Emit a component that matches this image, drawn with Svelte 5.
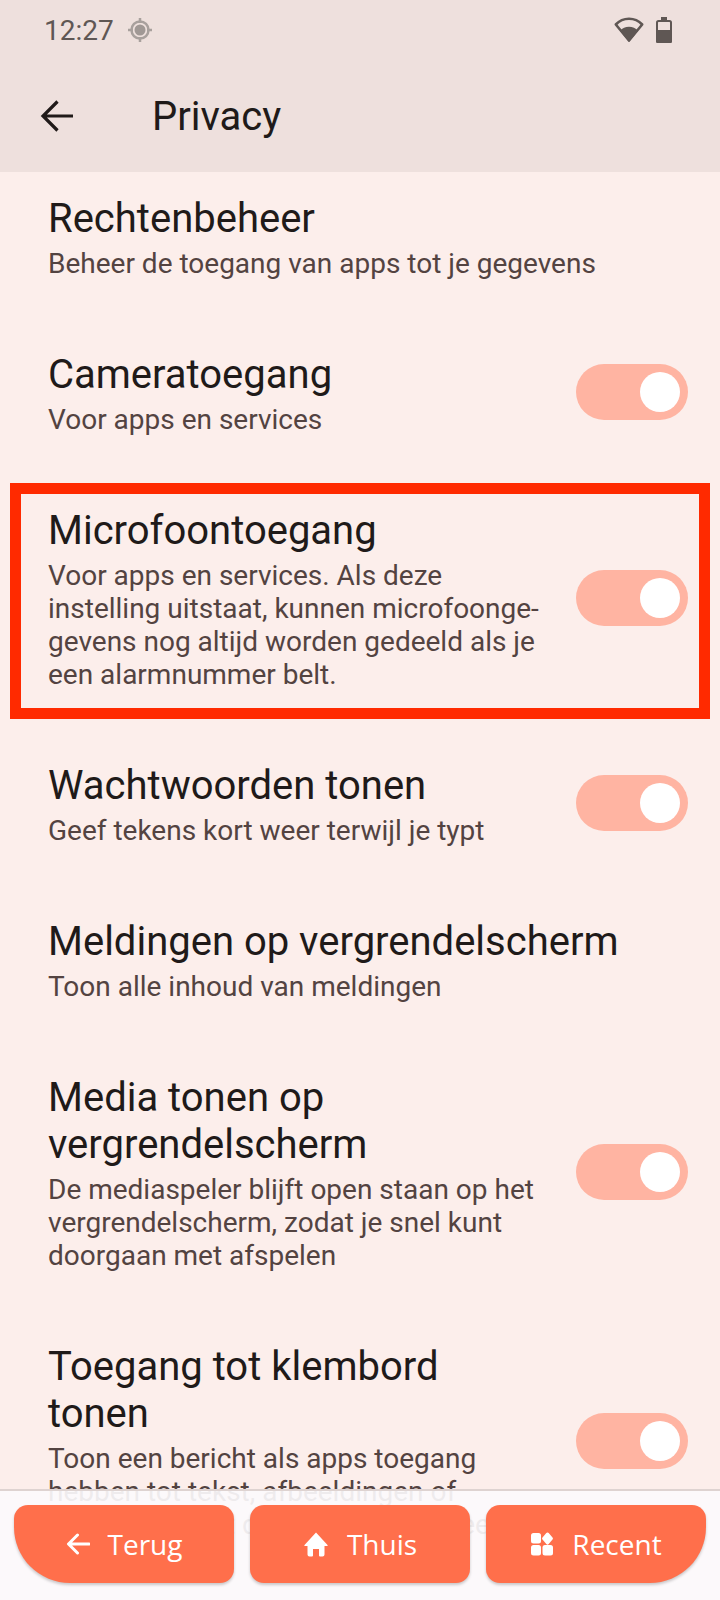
<script lang="ts">
  interface Row {
    title: string;
    summary: string;
    toggle?: boolean;
    highlight?: boolean;
  }

  const rows: Row[] = [
    { title: "Rechtenbeheer", summary: "Beheer de toegang van apps tot je gegevens" },
    { title: "Cameratoegang", summary: "Voor apps en services", toggle: true },
    {
      title: "Microfoontoegang",
      summary:
        "Voor apps en services. Als deze\ninstelling uitstaat, kunnen microfoonge-\ngevens nog altijd worden gedeeld als je\neen alarmnummer belt.",
      toggle: true,
      highlight: true,
    },
    { title: "Wachtwoorden tonen", summary: "Geef tekens kort weer terwijl je typt", toggle: true },
    { title: "Meldingen op vergrendelscherm", summary: "Toon alle inhoud van meldingen" },
    {
      title: "Media tonen op\nvergrendelscherm",
      summary:
        "De mediaspeler blijft open staan op het\nvergrendelscherm, zodat je snel kunt\ndoorgaan met afspelen",
      toggle: true,
    },
    {
      title: "Toegang tot klembord\ntonen",
      summary:
        "Toon een bericht als apps toegang\nhebben tot tekst, afbeeldingen of\nandere content die je hebt gekopieerd",
      toggle: true,
    },
  ];
</script>

<div class="screen">
  <header class="appbar">
    <div class="status">
      <div class="status-left">
        <span class="clock">12:27</span>
        <svg width="24" height="24" viewBox="0 0 24 24">
          <path d="M12 0v5M12 19v5M0 12h5M19 12h5" stroke="#a8a09d" stroke-width="2.500" fill="none" />
          <circle cx="12" cy="12" r="8.500" fill="none" stroke="#a8a09d" stroke-width="2.500" />
          <circle cx="12" cy="12" r="5.500" fill="#a09895" />
        </svg>
      </div>
      <div class="status-right">
        <svg width="30" height="26" viewBox="0 0 30 26">
          <path d="M15 23.500L1.800 7.500C5.400 3.700 10 1.800 15 1.800s9.600 1.900 13.200 5.700z" fill="none" stroke="#5f5754" stroke-width="2.600" stroke-linejoin="round" />
          <path d="M15 25L6 13.800C8.300 11.300 11.500 9.800 15 9.800s6.700 1.500 9 4z" fill="#5f5754" />
        </svg>
        <svg width="16" height="26" viewBox="0 0 16 26">
          <path d="M5 0h6v3H5z" fill="#5f5754" />
          <rect x="1" y="4" width="14" height="21" rx="1.500" fill="none" stroke="#5f5754" stroke-width="2" />
          <path d="M0 13h16v11.500a1.500 1.500 0 0 1-1.500 1.500h-13A1.500 1.500 0 0 1 0 24.500z" fill="#5f5754" />
        </svg>
      </div>
    </div>
    <div class="toolbar">
      <svg class="back" width="33" height="32" viewBox="0 0 33 32">
        <path d="M33 16H3.500M17.500 1.500L3 16l14.500 14.500" fill="none" stroke="#201a19" stroke-width="3.200" />
      </svg>
      <h1>Privacy</h1>
    </div>
  </header>

  <main class="list">
    {#each rows as row}
      <div class="row" class:highlight={row.highlight}>
        <div class="text">
          <div class="title">{row.title}</div>
          <div class="summary">{row.summary}</div>
        </div>
        {#if row.toggle}
          <div class="switch"><span class="thumb"></span></div>
        {/if}
      </div>
    {/each}
  </main>

  <nav class="bottom">
    <button class="nav left">
      <svg width="24" height="24" viewBox="0 0 24 24">
        <path d="M23 12H3M11.500 3L2.500 12l9 9" fill="none" stroke="#fff" stroke-width="3" stroke-linecap="round" stroke-linejoin="round" />
      </svg>
      Terug
    </button>
    <button class="nav">
      <svg width="26" height="26" viewBox="0 0 26 26">
        <path d="M13 1.500L1.500 14a.6.6 0 0 0 .5 1H4.500v8.500a2 2 0 0 0 2 2H9a1 1 0 0 0 1-1V18h6v6.500a1 1 0 0 0 1 1h2.500a2 2 0 0 0 2-2V15H24a.6.6 0 0 0 .5-1z" fill="#fff" />
      </svg>
      Thuis
    </button>
    <button class="nav">
      <svg width="24" height="24" viewBox="0 0 24 24">
        <rect x="1" y="1" width="10" height="10.500" rx="2.500" fill="#fff" />
        <path d="M17.500 0.500a1.500 1.500 0 0 1 1.200.5l4 4.700a1.500 1.500 0 0 1 0 1.600l-4 4.700a1.500 1.500 0 0 1-2.400 0l-4-4.700a1.500 1.500 0 0 1 0-1.600l4-4.700a1.500 1.500 0 0 1 1.200-.5z" fill="#fff" />
        <rect x="1" y="13" width="10" height="10.500" rx="2.500" fill="#fff" />
        <rect x="12.500" y="13" width="10.500" height="10.500" rx="2.500" fill="#fff" />
      </svg>
      Recent
    </button>
  </nav>
</div>

<style>
  :global(body) {
    background: #fceeeb;
  }

  .screen {
    position: relative;
    width: 720px;
    height: 1600px;
    overflow: hidden;
    background: #fceeeb;
    font-family: Roboto, "Liberation Sans", sans-serif;
  }

  .appbar {
    height: 172px;
    background: #eee0dd;
  }

  .status {
    display: flex;
    justify-content: space-between;
    align-items: center;
    height: 60px;
    padding: 0 48px 0 44px;
  }

  .status-left,
  .status-right {
    display: flex;
    align-items: center;
  }

  .status-left {
    gap: 14px;
  }

  .status-right {
    gap: 12px;
  }

  .clock {
    font-size: 28px;
    color: #5f5754;
  }

  .toolbar {
    display: flex;
    align-items: center;
    height: 112px;
    padding-left: 40px;
  }

  .back {
    margin-right: 79px;
  }

  h1 {
    margin: 0;
    font-size: 40px;
    font-weight: 400;
    color: #201a19;
  }

  .list {
    display: flex;
    flex-direction: column;
  }

  .row {
    position: relative;
    display: flex;
    align-items: center;
    justify-content: space-between;
    padding: 36px 32px 35px 48px;
  }

  .row:first-child {
    padding-top: 23px;
  }

  .row.highlight::after {
    content: "";
    position: absolute;
    top: 12px;
    right: 10px;
    bottom: 7px;
    left: 10px;
    border: 11px solid #ff2a00;
  }

  .text {
    flex: 1;
    min-width: 0;
  }

  .title {
    margin-bottom: 5px;
    font-size: 40px;
    line-height: 47px;
    color: #201a19;
    white-space: pre-line;
  }

  .summary {
    font-size: 28px;
    line-height: 33px;
    color: #534341;
    white-space: pre-line;
  }

  .switch {
    display: flex;
    flex: none;
    align-items: center;
    justify-content: flex-end;
    width: 112px;
    height: 56px;
    margin-bottom: 3px;
    padding-right: 8px;
    box-sizing: border-box;
    border-radius: 28px;
    background: #ffb4a2;
  }

  .thumb {
    width: 40px;
    height: 40px;
    border-radius: 50%;
    background: #fff;
  }

  .bottom {
    position: absolute;
    left: 0;
    right: 0;
    bottom: 0;
    display: flex;
    justify-content: space-between;
    height: 111px;
    padding: 14px 14px 0;
    box-sizing: border-box;
    border-top: 2px solid #ded3d1;
    background: rgba(252, 250, 252, 0.92);
  }

  .nav {
    display: flex;
    align-items: center;
    justify-content: center;
    gap: 18px;
    width: 220px;
    height: 78px;
    padding: 0;
    border: 0;
    border-radius: 14px;
    background: #ff6f4b;
    color: #fff;
    font-family: "Open Sans", "Noto Sans", sans-serif;
    font-size: 28px;
    box-shadow: 0 2px 3px rgba(0, 0, 0, 0.2);
  }

  .nav.left {
    border-bottom-left-radius: 56px;
  }

  .nav:last-child {
    border-bottom-right-radius: 56px;
  }
</style>
